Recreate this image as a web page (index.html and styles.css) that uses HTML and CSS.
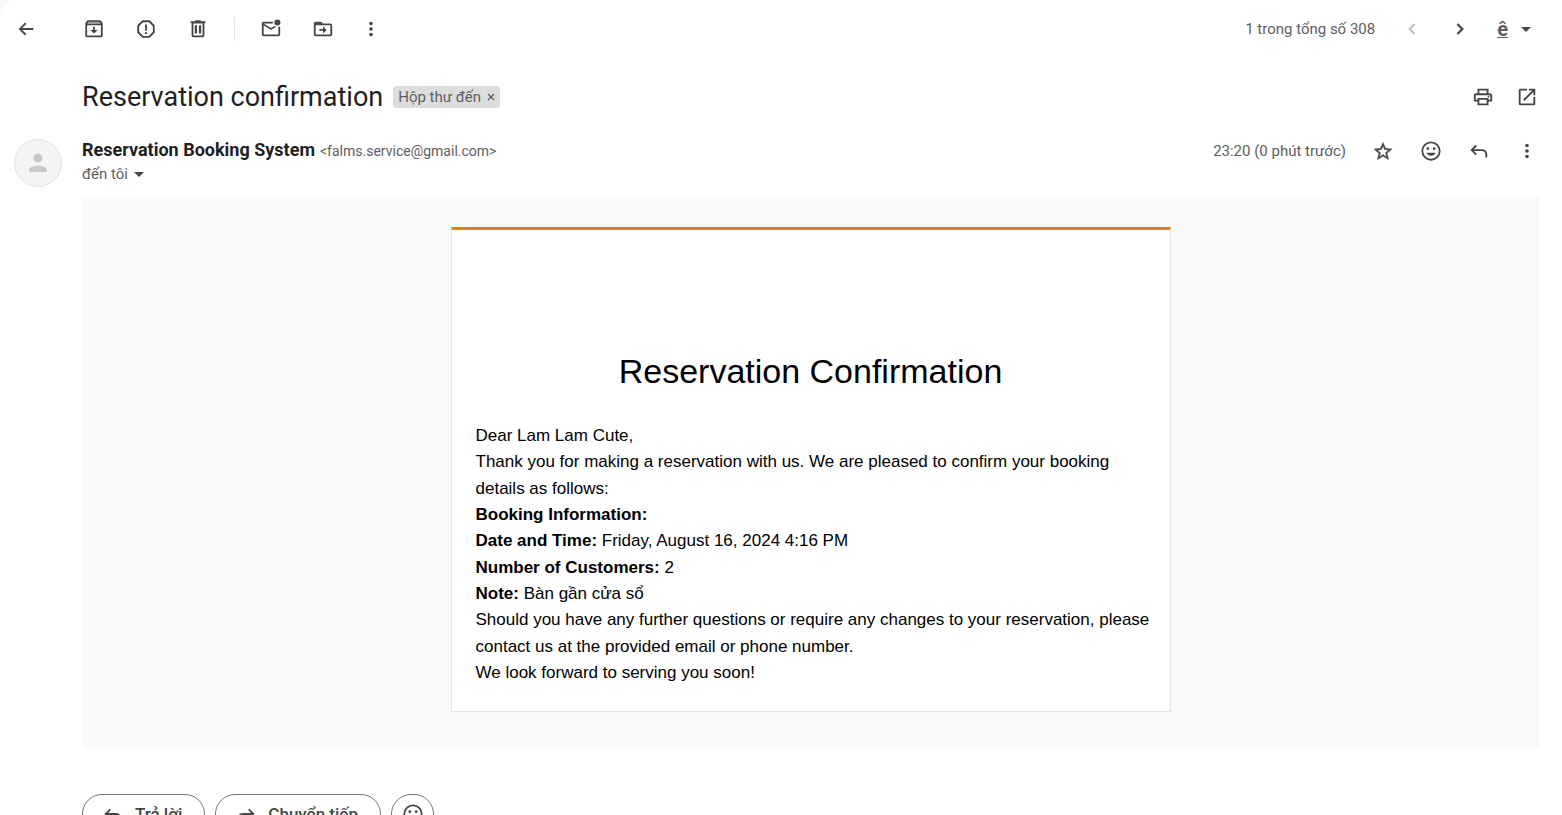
FILE: index.html
```
<!DOCTYPE html>
<html lang="vi">
<head>
<meta charset="utf-8">
<title>Reservation confirmation</title>
<link rel="stylesheet" href="styles.css">
</head>
<body>
<main class="page">
  <header class="toolbar">
    <button class="icon-btn back" aria-label="Quay lại"><svg viewBox="0 0 24 24"><path d="M20 11H7.830l4.590-4.590L11 5l-7 7 7 7 1.410-1.410L7.830 13H20v-2z"/></svg></button>
    <div class="actions">
      <button class="icon-btn" aria-label="Lưu trữ"><svg viewBox="0 0 24 24"><path fill-rule="evenodd" d="M5 2.500h14l2.500 3V19a2 2 0 0 1-2 2h-15a2 2 0 0 1-2-2V5.500zM4.500 8v11h15V8z"/><path opacity=".45" fill="#fff" d="M6 4h12l1.500 2.500h-15z"/><path d="M11 9.500h2V13h3l-4 4-4-4h3z"/></svg></button>
      <button class="icon-btn" aria-label="Báo cáo vi phạm"><svg viewBox="0 0 24 24"><path fill-rule="evenodd" d="M16 2.500H8L2.500 8v8L8 21.500h8l5.500-5.500V8zM19.500 15.100l-4.400 4.400H8.900l-4.400-4.400V8.900l4.400-4.400h6.200l4.400 4.400z"/><path d="M11 7h2v7h-2z"/><circle cx="12" cy="16.500" r="1.200"/></svg></button>
      <button class="icon-btn" aria-label="Xóa"><svg viewBox="0 0 24 24"><path fill-rule="evenodd" d="M15 3.500v-1H9v1H4v2h1V19a2 2 0 0 0 2 2h10a2 2 0 0 0 2-2V5.500h1v-2zM17 19H7V6h10zM8.500 8H11v9H8.500zM13 8h2.500v9H13z"/></svg></button>
      <span class="divider"></span>
      <button class="icon-btn" aria-label="Đánh dấu là chưa đọc"><svg viewBox="0 0 24 24"><path d="M22 8.980V18a2 2 0 0 1-2 2H4a2 2 0 0 1-2-2V6a2 2 0 0 1 2-2h10.100a5 5 0 0 0 0 2H4l8 5 3.670-2.290a5 5 0 0 0 1.800.860L12 13 4 8v10h16V9.900a5 5 0 0 0 2-.920z"/><circle cx="19" cy="5" r="3.300"/></svg></button>
      <button class="icon-btn" aria-label="Di chuyển"><svg viewBox="0 0 24 24"><path fill-rule="evenodd" d="M4 4h6l2 2h8a2 2 0 0 1 2 2v10a2 2 0 0 1-2 2H4a2 2 0 0 1-2-2V6a2 2 0 0 1 2-2zm0 4v10h16V8zM12 9l4 4-4 4v-3H8v-2h4z"/></svg></button>
      <button class="icon-btn" aria-label="Thêm"><svg viewBox="0 0 24 24"><circle cx="12" cy="6" r="2"/><circle cx="12" cy="12" r="2"/><circle cx="12" cy="18" r="2"/></svg></button>
    </div>
    <div class="pager">
      <span class="count">1 trong tổng số 308</span>
      <button class="icon-btn" disabled aria-label="Mới hơn"><svg viewBox="0 0 24 24"><path d="M15.410 7.410L14 6l-6 6 6 6 1.410-1.410L10.830 12z"/></svg></button>
      <button class="icon-btn" aria-label="Cũ hơn"><svg viewBox="0 0 24 24"><path d="M8.590 16.590L10 18l6-6-6-6-1.410 1.410L13.170 12z" stroke="currentColor" stroke-width=".5"/></svg></button>
      <button class="input-tool" aria-label="Công cụ nhập liệu"><span class="glyph">ê</span><svg class="caret" viewBox="0 0 10 5"><path d="M0 0h10L5 5z"/></svg></button>
    </div>
  </header>

  <section class="subject">
    <h1>Reservation confirmation</h1>
    <span class="label">Hộp thư đến <button aria-label="Xóa nhãn"><svg viewBox="0 0 8 8"><path d="M1 1l6 6M7 1L1 7" stroke="currentColor" stroke-width="1.300"/></svg></button></span>
    <div class="subject-tools">
      <button class="icon-btn" aria-label="In tất cả"><svg viewBox="0 0 24 24"><path fill-rule="evenodd" d="M19 8h-1V3H6v5H5a3 3 0 0 0-3 3v6h4v4h12v-4h4v-6a3 3 0 0 0-3-3zM8 5h8v3H8zm8 14H8v-4h8zm2-4v-2H6v2H4v-4a1 1 0 0 1 1-1h14a1 1 0 0 1 1 1v4z"/><circle cx="18" cy="11.500" r="1"/></svg></button>
      <button class="icon-btn" aria-label="Trong cửa sổ mới"><svg viewBox="0 0 24 24"><path d="M19 19H5V5h7V3H5a2 2 0 0 0-2 2v14a2 2 0 0 0 2 2h14a2 2 0 0 0 2-2v-7h-2zM14 3v2h3.590l-9.830 9.830 1.410 1.410L19 6.410V10h2V3z"/></svg></button>
    </div>
  </section>

  <section class="sender">
    <div class="avatar"><svg viewBox="0 0 24 24"><circle cx="12" cy="7" r="4.500"/><path d="M3 21v-2c0-3 6-4.500 9-4.500s9 1.500 9 4.500v2z"/></svg></div>
    <div class="who">
      <div class="from"><strong>Reservation Booking System</strong><span class="address">&lt;falms.service@gmail.com&gt;</span></div>
      <button class="to">đến tôi <svg class="caret" viewBox="0 0 10 5"><path d="M0 0h10L5 5z"/></svg></button>
    </div>
    <div class="message-tools">
      <time>23:20 (0 phút trước)</time>
      <button class="icon-btn" aria-label="Gắn dấu sao"><svg viewBox="0 0 24 24"><path fill-rule="evenodd" d="M22 9.740l-7.190-.620L12 2.500 9.190 9.130 2 9.740l5.460 4.730-1.640 7.030L12 17.770l6.180 3.730-1.630-7.030zM12 15.900l-3.760 2.270 1-4.280-3.320-2.880 4.380-.380L12 6.600l1.710 4.040 4.380.380-3.320 2.880 1 4.280z" stroke="currentColor" stroke-width=".4"/></svg></button>
      <button class="icon-btn" aria-label="Thêm phản ứng"><svg viewBox="0 0 24 24"><circle cx="12" cy="12" r="9.500" fill="none" stroke="currentColor" stroke-width="2"/><circle cx="8.500" cy="9.500" r="1.500"/><circle cx="15.500" cy="9.500" r="1.500"/><path d="M7 14h10c-.8 2-2.700 3.200-5 3.200S7.800 16 7 14z"/></svg></button>
      <button class="icon-btn" aria-label="Trả lời"><svg viewBox="0 0 24 24"><path d="M9 6l-5 5 5 5M4 11h11q5 0 5 5v3" fill="none" stroke="currentColor" stroke-width="2"/></svg></button>
      <button class="icon-btn" aria-label="Tùy chọn khác"><svg viewBox="0 0 24 24"><circle cx="12" cy="6" r="2"/><circle cx="12" cy="12" r="2"/><circle cx="12" cy="18" r="2"/></svg></button>
    </div>
  </section>

  <article class="mail">
    <div class="card">
      <h2>Reservation Confirmation</h2>
      <p>Dear Lam Lam Cute,</p>
      <p>Thank you for making a reservation with us. We are pleased to confirm your booking details as follows:</p>
      <p><b>Booking Information:</b></p>
      <p><b>Date and Time:</b> Friday, August 16, 2024 4:16 PM</p>
      <p><b>Number of Customers:</b> 2</p>
      <p><b>Note:</b> Bàn gần cửa sổ</p>
      <p>Should you have any further questions or require any changes to your reservation, please contact us at the provided email or phone number.</p>
      <p>We look forward to serving you soon!</p>
    </div>
  </article>

  <footer class="replies">
    <button class="pill"><svg viewBox="0 0 24 24"><path d="M9 7l-5 5 5 5M4 12h11q5 0 5 5v3" fill="none" stroke="currentColor" stroke-width="2"/></svg>Trả lời</button>
    <button class="pill"><svg viewBox="0 0 24 24"><path d="M15 7l5 5-5 5M20 12H9q-5 0-5 5v3" fill="none" stroke="currentColor" stroke-width="2"/></svg>Chuyển tiếp</button>
    <button class="pill round" aria-label="Thêm phản ứng"><svg viewBox="0 0 24 24"><circle cx="12" cy="12" r="9.500" fill="none" stroke="currentColor" stroke-width="2"/><circle cx="8.500" cy="9.500" r="1.500"/><circle cx="15.500" cy="9.500" r="1.500"/><path d="M7 14h10c-.8 2-2.700 3.200-5 3.200S7.800 16 7 14z"/></svg></button>
  </footer>
</main>
</body>
</html>
```
FILE: styles.css
```
* { box-sizing: border-box; }

body {
  margin: 0;
  height: 100vh;
  overflow: hidden;
  background: #f6f8fc;
  color: #5e5e5e;
  font: 15px/20px "Google Sans", Roboto, sans-serif;
}

button {
  padding: 0;
  border: 0;
  background: none;
  color: inherit;
  font: inherit;
}

svg { display: block; fill: currentColor; }

.page {
  min-height: 100vh;
  border-radius: 16px 0 0 0;
  background: #fff;
}

.icon-btn { flex: none; color: #444746; }
.icon-btn svg { width: 22px; height: 22px; }
.icon-btn:disabled { color: #b8b8b8; }
.caret { width: 10px; height: 5px; color: #444746; }

.toolbar {
  display: flex;
  align-items: center;
  height: 58px;
  padding: 0 24px 0 15px;
}
.actions {
  display: flex;
  align-items: center;
  gap: 30px;
  margin-left: 46px;
}
.divider {
  width: 1px;
  height: 24px;
  margin: 0 -5px;
  background: #e4e5e7;
}
.actions .icon-btn:last-child { margin-left: -4px; }
.pager {
  display: flex;
  align-items: center;
  gap: 26px;
  margin-left: auto;
}
.input-tool {
  display: flex;
  align-items: center;
  gap: 13px;
  padding-right: 7px;
  color: #5e5e5e;
}
.glyph {
  font-size: 20px;
  font-weight: 700;
  text-decoration: underline 1px;
  text-underline-offset: 1px;
}

.subject {
  display: flex;
  align-items: center;
  height: 78px;
  padding: 0 24px 0 82px;
}
.subject h1 {
  margin: 0;
  color: #1f1f1f;
  font-size: 27px;
  font-weight: 400;
  line-height: 32px;
}
.label {
  display: flex;
  align-items: center;
  gap: 6px;
  margin-left: 10px;
  padding: 0 5px;
  border-radius: 4px;
  background: #ddd;
  line-height: 22px;
}
.label svg { width: 8px; height: 8px; }
.subject-tools {
  display: flex;
  gap: 22px;
  margin-left: auto;
}

.sender {
  display: flex;
  align-items: flex-start;
  padding: 3px 24px 10px 14px;
}
.avatar {
  display: grid;
  place-items: center;
  width: 48px;
  height: 48px;
  border: 1px solid #e3e3e3;
  border-radius: 50%;
  background: #f4f4f4;
  color: #c9c9c9;
}
.avatar svg { width: 24px; height: 24px; }
.who { margin-left: 20px; }
.from {
  display: flex;
  align-items: baseline;
  gap: 5px;
  line-height: 22px;
}
.from strong { color: #1f1f1f; font-size: 18px; }
.address { font-size: 14px; }
.to {
  display: flex;
  align-items: center;
  gap: 6px;
  line-height: 25px;
}
.message-tools {
  display: flex;
  align-items: center;
  gap: 26px;
  margin-left: auto;
  line-height: 24px;
}

.mail {
  margin: 0 23px 0 82px;
  padding: 30px 24px 36px;
  background: #f9f9f9;
}
.card {
  max-width: 720px;
  margin: 0 auto;
  padding: 114px 16px 25px;
  border: 1px solid #e5e5e5;
  border-top: 3px solid #f07422;
  background: #fff;
  color: #000;
  font: 17px/1.55 "Liberation Sans", Arial, sans-serif;
}
.card h2 {
  margin: 0 0 25px;
  font-size: 34px;
  font-weight: 400;
  line-height: 54px;
  text-align: center;
}
.card p {
  margin: 0;
  padding-left: 8px;
}

.replies {
  display: flex;
  gap: 10px;
  padding: 46px 24px 24px 82px;
}
.pill {
  display: flex;
  align-items: center;
  gap: 11px;
  height: 40px;
  padding: 0 22px 0 19px;
  border: 1px solid #747775;
  border-radius: 20px;
  color: #444746;
  font-size: 17px;
  font-weight: 500;
}
.pill svg { width: 22px; height: 22px; }
.pill.round {
  justify-content: center;
  width: 43px;
  padding: 0;
}
```
